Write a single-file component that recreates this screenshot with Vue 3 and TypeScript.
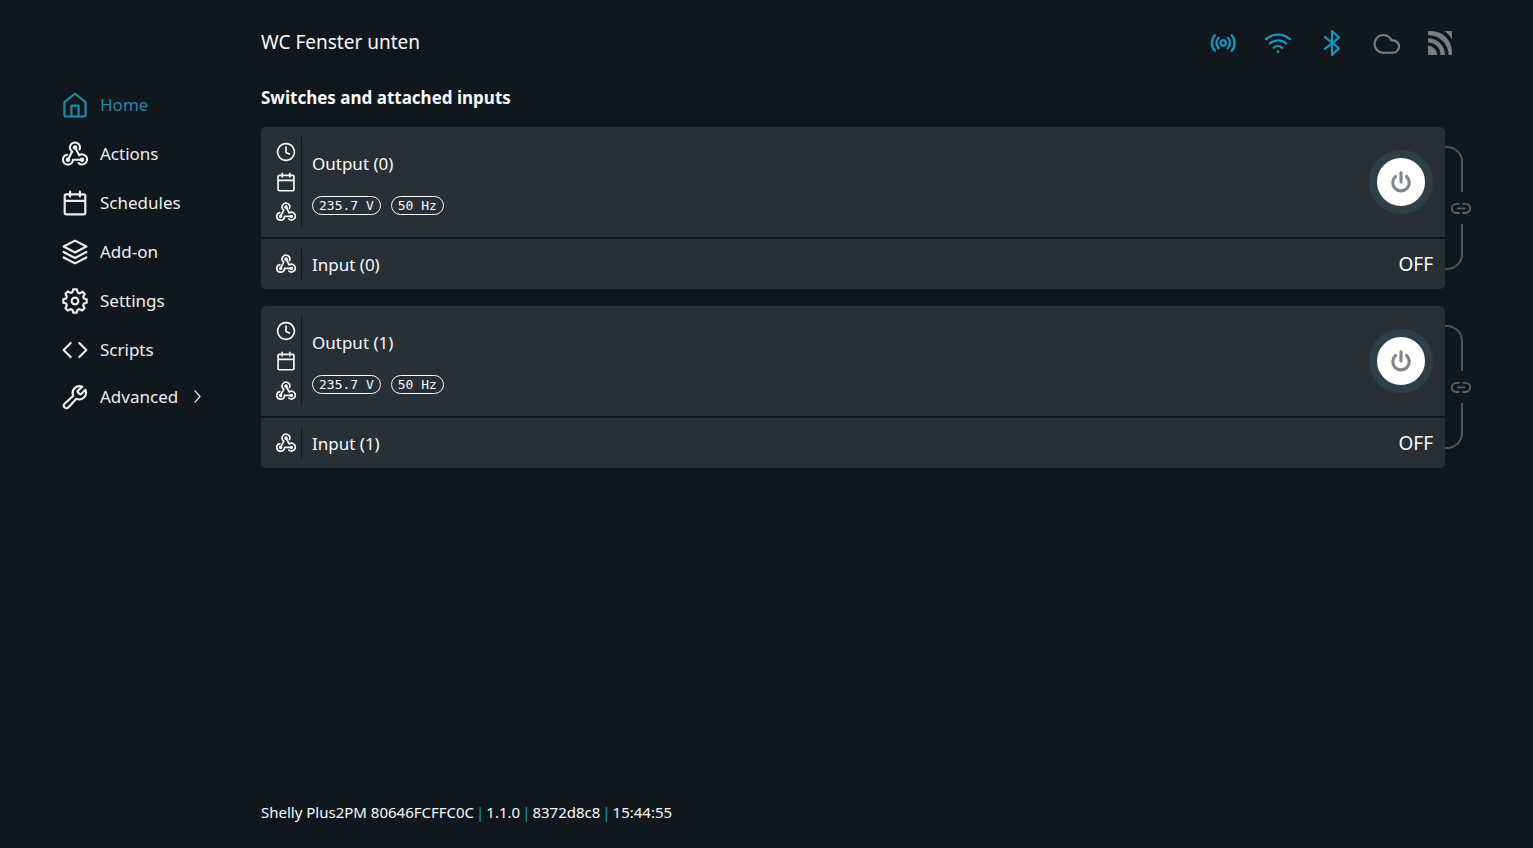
<script setup lang="ts">
import { h, reactive } from 'vue'

type Shape = { d: string; fill?: boolean; width?: number }

const icons: Record<string, Shape[]> = {
  home: [
    { d: 'M2.200 9.4 12 1.6l9.800 7.800V21a1.6 1.6 0 0 1-1.6 1.6H3.8A1.6 1.6 0 0 1 2.200 21z' },
    { d: 'M8.700 22.500V12.500h6.600v10' },
  ],
  webhook: [
    { d: 'M5.500 17 9.400 9.800A4.600 4.600 0 1 1 16.200 7.700' },
    { d: 'M12 6 15.900 13.200A4.600 4.600 0 1 1 15.400 20.400' },
    { d: 'M18.500 17.300H10.100A4.600 4.600 0 1 1 4.600 12.700' },
    { d: 'M12 3.900a2.100 2.100 0 1 0 .01 0zM5.500 15.200a2.100 2.100 0 1 0 .01 0zM18.500 15.200a2.100 2.100 0 1 0 .01 0z', fill: true },
  ],
  calendar: [
    { d: 'M4 4h16a1.500 1.500 0 0 1 1.500 1.500V21a1.500 1.500 0 0 1-1.500 1.500H4A1.500 1.500 0 0 1 2.500 21V5.500A1.500 1.500 0 0 1 4 4zM2.500 10h19M7.500 1.500v4.500M16.500 1.500v4.500' },
  ],
  layers: [{ d: 'M12 1.500 1.500 7 12 12.500 22.500 7zM1.500 12 12 17.500 22.500 12M1.500 17 12 22.500 22.500 17' }],
  gear: [
    { d: 'M12 8.900a3.100 3.100 0 1 0 .01 0z' },
    {
      d: 'M10.300 1.300h3.400L14.500 4.200 16.400 5 19 3.500 21 5.500 19.600 8.100 20.200 9.700 22.800 10.400V13.600L20.200 14.300 19.500 16 20.800 18.600 18.600 20.800 16 19.500 14.300 20.200 13.600 22.800H10.400L9.700 20.200 8 19.500 5.400 20.800 3.200 18.600 4.500 16 3.800 14.300 1.200 13.600V10.400L3.800 9.700 4.500 8 3.200 5.400 5.400 3.200 8 4.500 9.600 3.900z',
    },
  ],
  code: [{ d: 'M8 5.500 1.500 12 8 18.500M16 5.500l6.500 6.500-6.500 6.500' }],
  wrench: [
    { d: 'M14.700 6.300a1 1 0 0 0 0 1.400l1.600 1.600a1 1 0 0 0 1.400 0l3.900-3.900a6.300 6.300 0 0 1-8.300 8.300l-7.500 8a2.300 2.300 0 0 1-3.400-3.400l8-7.500a6.300 6.300 0 0 1 8.300-8.300z' },
  ],
  chevron: [{ d: 'M8 3l8 9-8 9' }],
  clock: [{ d: 'M12 2a10 10 0 1 0 .01 0zM12 6v6.500l4 2' }],
  broadcast: [
    { d: 'M11.300 9.500a2.500 2.500 0 1 0 .01 0zM7 7.200a7 7 0 0 0 0 9.600M15.600 7.200a7 7 0 0 1 0 9.600M3.500 4.800a11 11 0 0 0 0 14.400M19.100 4.800a11 11 0 0 1 0 14.400', width: 2.2 },
  ],
  wifi: [
    { d: 'M1 8.500a16.500 16.500 0 0 1 22 0M4.600 12.400a11 11 0 0 1 14.800 0M8.200 16.300a5.700 5.700 0 0 1 7.600 0', width: 2.2 },
    { d: 'M12 18.800a1.300 1.300 0 1 0 .01 0z', fill: true },
  ],
  bluetooth: [{ d: 'M5.500 6.500 18.500 17 12 23V1l6.500 6-13 10.500' }],
  cloud: [{ d: 'M18.300 9.500h-1.200A8.200 8.200 0 1 0 9 21h9.300a5.750 5.750 0 0 0 0-11.500z' }],
  mqtt: [
    { d: 'M1 14.500A8.500 8.500 0 0 1 9.500 23H1zM1 7.500A15.500 15.500 0 0 1 16.500 23h-4A11.500 11.500 0 0 0 1 11.500zM1 1h3A19.500 19.500 0 0 1 23 19v4h-3A19 19 0 0 0 1 4.500zM16 1h7v7.500a23 23 0 0 0-7-7.500z', fill: true },
  ],
  power: [{ d: 'M12 2v10M6 6a9 9 0 1 0 12 0', width: 3.4 }],
  link: [{ d: 'M9.500 7H6.500a5 5 0 0 0 0 11h3M14.500 7h3a5 5 0 0 1 0 11h-3M8 12.500h8', width: 2.2 }],
}

const nav = [
  { label: 'Home', icon: 'home', active: true },
  { label: 'Actions', icon: 'webhook' },
  { label: 'Schedules', icon: 'calendar' },
  { label: 'Add-on', icon: 'layers' },
  { label: 'Settings', icon: 'gear' },
  { label: 'Scripts', icon: 'code' },
  { label: 'Advanced', icon: 'wrench', more: true },
]

const statuses = [
  { name: 'Access point', icon: 'broadcast', on: true },
  { name: 'Wi-Fi', icon: 'wifi', on: true },
  { name: 'Bluetooth', icon: 'bluetooth', on: true },
  { name: 'Cloud', icon: 'cloud', on: false },
  { name: 'MQTT', icon: 'mqtt', on: false },
]

const channels = reactive([
  { id: 0, volts: '235.7 V', freq: '50 Hz', on: false, input: false },
  { id: 1, volts: '235.7 V', freq: '50 Hz', on: false, input: false },
])

const outputIcons = [
  { name: 'Timers', icon: 'clock' },
  { name: 'Schedules', icon: 'calendar' },
  { name: 'Actions', icon: 'webhook' },
]
const info = ['Shelly Plus2PM 80646FCFFC0C', '1.1.0', '8372d8c8', '15:44:55']

const Icon = (props: { name: string }) =>
  h(
    'svg',
    { viewBox: '0 0 24 24', 'aria-hidden': 'true' },
    icons[props.name].map((s) =>
      h('path', {
        d: s.d,
        fill: s.fill ? 'currentColor' : 'none',
        stroke: s.fill ? 'none' : 'currentColor',
        'stroke-width': s.width ?? 2,
        'stroke-linecap': 'round',
        'stroke-linejoin': 'round',
      }),
    ),
  )
Icon.props = ['name']
</script>

<template>
  <div class="app">
    <aside class="sidebar">
      <nav aria-label="Main">
        <a
          v-for="item in nav"
          :key="item.label"
          href="#"
          class="nav-link"
          :class="{ active: item.active, expandable: item.more }"
        >
          <Icon :name="item.icon" class="icon nav-icon" />
          <span>{{ item.label }}</span>
          <Icon v-if="item.more" name="chevron" class="icon chevron" />
        </a>
      </nav>
    </aside>

    <div class="content">
      <header class="topbar">
        <h1>WC Fenster unten</h1>
        <div class="statuses">
          <button v-for="s in statuses" :key="s.name" type="button" class="status" :class="{ on: s.on }" :aria-label="s.name">
            <Icon :name="s.icon" class="icon status-icon" />
          </button>
        </div>
      </header>

      <main>
        <h2>Switches and attached inputs</h2>
        <section v-for="c in channels" :key="c.id" class="channel">
          <div class="card">
            <div class="row output">
              <div class="tools">
                <button v-for="t in outputIcons" :key="t.name" type="button" class="tool" :aria-label="t.name">
                  <Icon :name="t.icon" class="icon tool-icon" />
                </button>
              </div>
              <div class="details">
                <h3>Output ({{ c.id }})</h3>
                <div class="chips">
                  <span class="chip">{{ c.volts }}</span>
                  <span class="chip">{{ c.freq }}</span>
                </div>
              </div>
              <button type="button" class="power" :aria-pressed="c.on" :aria-label="`Toggle output ${c.id}`" @click="c.on = !c.on">
                <Icon name="power" class="icon power-icon" />
              </button>
            </div>
            <div class="row input">
              <div class="tools">
                <button type="button" class="tool" aria-label="Actions">
                  <Icon name="webhook" class="icon tool-icon" />
                </button>
              </div>
              <h3 class="details">Input ({{ c.id }})</h3>
              <span class="state">{{ c.input ? 'ON' : 'OFF' }}</span>
            </div>
          </div>
          <div class="bracket">
            <span class="arm top"></span>
            <Icon name="link" class="icon link-icon" />
            <span class="arm bottom"></span>
          </div>
        </section>
      </main>

      <footer>
        <template v-for="(part, i) in info" :key="part">
          <span v-if="i" class="bar">|</span>
          <span>{{ part }}</span>
        </template>
      </footer>
    </div>
  </div>
</template>

<style>
body {
  margin: 0;
  background: #10181e;
}
</style>

<style scoped>
.app {
  display: flex;
  min-height: 100vh;
  background: #10181e;
  color: #f8fafc;
  font-family: 'Segoe UI', 'Noto Sans', sans-serif;
}
h1,
h2,
h3 {
  margin: 0;
}
button {
  padding: 0;
  border: 0;
  background: none;
  color: inherit;
  font: inherit;
  cursor: pointer;
}
.icon {
  display: block;
  flex: none;
}
.sidebar {
  flex: none;
  width: 261px;
}
nav {
  display: flex;
  flex-direction: column;
  gap: 24px;
  padding: 92px 0 0 62px;
}
.nav-link {
  display: flex;
  align-items: center;
  gap: 12px;
  height: 25px;
  color: #eceff2;
  font-size: 17px;
  text-decoration: none;
}
.nav-link.active {
  color: #2387ab;
}
.nav-link.expandable {
  height: 21px;
}
.nav-icon {
  width: 26px;
  height: 26px;
}
.chevron {
  width: 15px;
  height: 15px;
}
.content {
  display: flex;
  flex: 1;
  flex-direction: column;
  min-width: 0;
}
.topbar {
  display: flex;
  align-items: center;
  justify-content: space-between;
  height: 86px;
  padding-right: 80px;
}
h1 {
  padding-bottom: 2px;
  font-size: 19px;
  font-weight: 400;
}
.statuses {
  display: flex;
  gap: 28px;
}
.status {
  color: #7b8085;
}
.status.on {
  color: #1d91ba;
}
.status-icon {
  width: 26px;
  height: 26px;
  overflow: visible;
}
main {
  flex: 1;
}
h2 {
  margin-bottom: 17px;
  font-size: 17px;
  line-height: 24px;
}
.channel {
  display: flex;
  margin-bottom: 17px;
  padding-right: 62px;
}
.card {
  flex: 1;
  overflow: hidden;
  border-radius: 5px;
}
.row {
  display: flex;
  align-items: center;
  padding: 10px 12px 10px 15px;
  background: #282f36;
}
.output {
  min-height: 90px;
}
.input {
  min-height: 30px;
  margin-top: 2px;
}
.tools {
  display: flex;
  flex-direction: column;
  align-items: flex-start;
  justify-content: center;
  align-self: stretch;
  gap: 10px;
  width: 25px;
  border-right: 1px solid #10181e;
}
.tool-icon {
  width: 20px;
  height: 20px;
}
.details {
  flex: 1;
  padding: 2px 0 0 10px;
}
h3 {
  font-size: 17px;
  font-weight: 400;
  line-height: 24px;
}
.chips {
  display: flex;
  gap: 10px;
  margin-top: 20px;
}
.chip {
  padding: 0 6px;
  border: 1px solid #f8fafc;
  border-radius: 10px;
  font-family: 'DejaVu Sans Mono', monospace;
  font-size: 13px;
  line-height: 17px;
}
.power {
  display: grid;
  place-items: center;
  box-sizing: border-box;
  width: 64px;
  height: 64px;
  border: 8px solid #2f3f4a;
  border-radius: 50%;
  background: #fff;
  color: #80868a;
}
.power-icon {
  width: 22px;
  height: 22px;
}
.state {
  font-size: 19px;
  line-height: 26px;
}
.bracket {
  display: flex;
  flex-direction: column;
  align-items: flex-start;
  justify-content: center;
  gap: 6px;
  width: 26px;
}
.arm {
  box-sizing: border-box;
  width: 18px;
  height: 46px;
  border-right: 2px solid #4f575d;
}
.arm.top {
  border-top: 2px solid #4f575d;
  border-top-right-radius: 16px;
}
.arm.bottom {
  border-bottom: 2px solid #4f575d;
  border-bottom-right-radius: 16px;
}
.link-icon {
  align-self: flex-end;
  width: 20px;
  height: 20px;
  color: #5a6268;
}
footer {
  display: flex;
  gap: 2px;
  padding-bottom: 25px;
  font-size: 15px;
  line-height: 22px;
}
.bar {
  color: #1d91ba;
}
</style>
